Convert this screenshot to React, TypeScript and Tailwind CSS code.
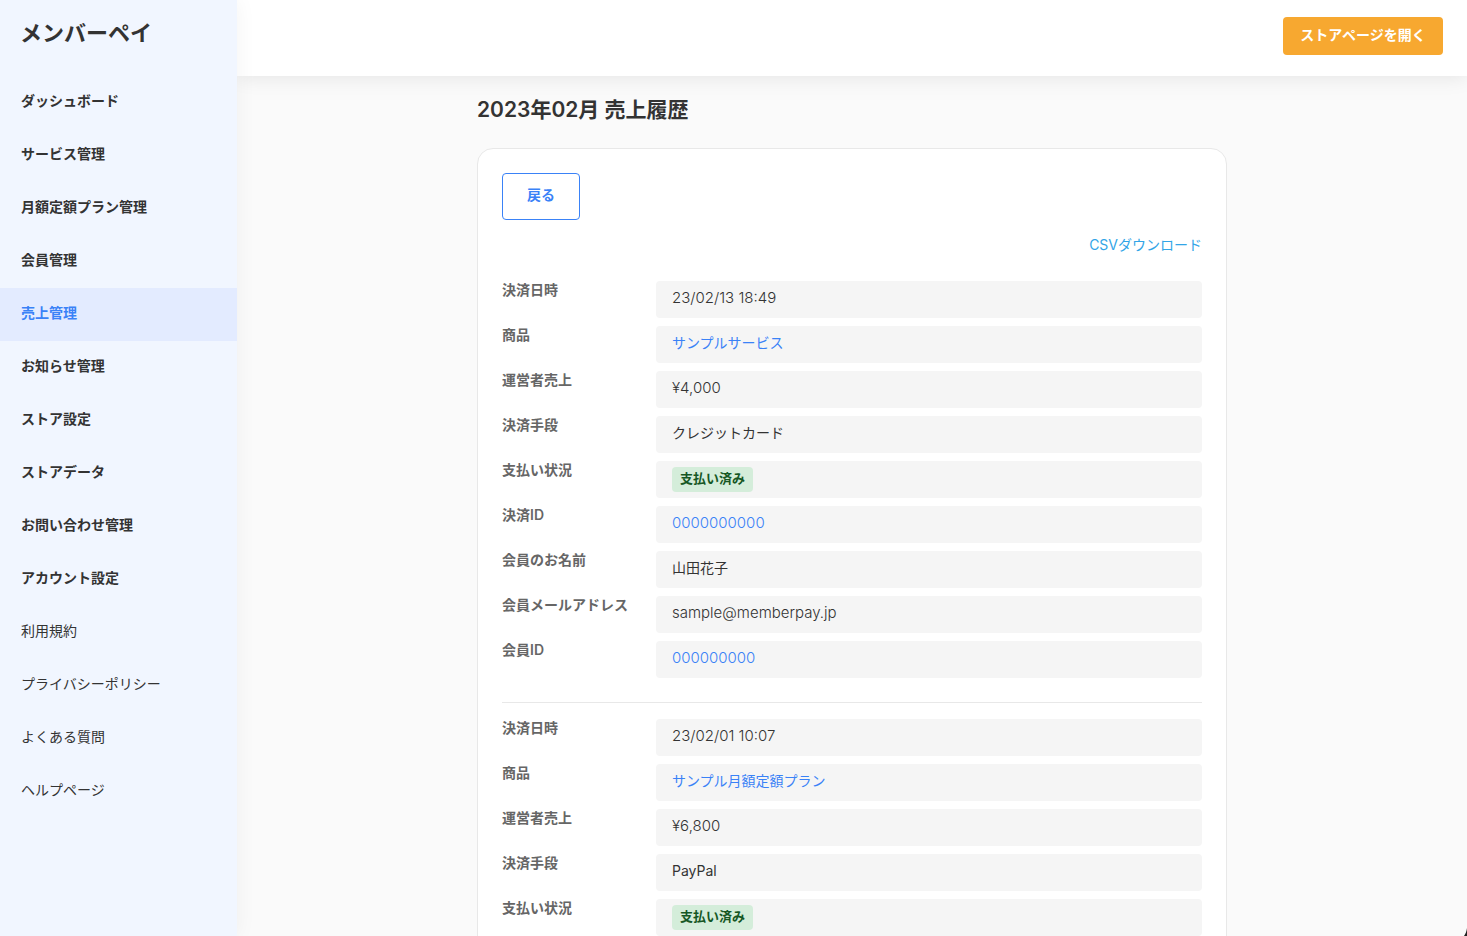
import type { ReactNode } from 'react';

type MenuItem = { label: string; sub?: boolean; active?: boolean };

type Sale = {
  date: string;
  product: string;
  amount: string;
  method: string;
  status: string;
  paymentId?: string;
  memberName?: string;
  memberEmail?: string;
  memberId?: string;
};

const menuItems: MenuItem[] = [
  { label: 'ダッシュボード' },
  { label: 'サービス管理' },
  { label: '月額定額プラン管理' },
  { label: '会員管理' },
  { label: '売上管理', active: true },
  { label: 'お知らせ管理' },
  { label: 'ストア設定' },
  { label: 'ストアデータ' },
  { label: 'お問い合わせ管理' },
  { label: 'アカウント設定' },
  { label: '利用規約', sub: true },
  { label: 'プライバシーポリシー', sub: true },
  { label: 'よくある質問', sub: true },
  { label: 'ヘルプページ', sub: true },
];

const sales: Sale[] = [
  {
    date: '23/02/13 18:49',
    product: 'サンプルサービス',
    amount: '¥4,000',
    method: 'クレジットカード',
    status: '支払い済み',
    paymentId: '0000000000',
    memberName: '山田花子',
    memberEmail: 'sample@memberpay.jp',
    memberId: '000000000',
  },
  {
    date: '23/02/01 10:07',
    product: 'サンプル月額定額プラン',
    amount: '¥6,800',
    method: 'PayPal',
    status: '支払い済み',
  },
];

function Sidebar() {
  return (
    <aside className="sticky top-0 z-20 h-screen w-[237px] shrink-0 overflow-hidden bg-[#f1f6ff] shadow-[0_0_20px_rgba(0,0,0,0.05)]">
      <a href="#" className="flex h-[76px] items-start px-5 pt-4 text-[22px] leading-[34px] font-semibold">
        メンバーペイ
      </a>
      <nav>
        {menuItems.map((item) => (
          <a
            key={item.label}
            href="#"
            className={`flex h-[53px] items-center px-[21px] pb-[3px] ${item.sub ? 'font-normal' : 'font-semibold'} ${
              item.active ? 'bg-[#e3ebff] text-[#3a82f7]' : ''
            }`}
          >
            {item.label}
          </a>
        ))}
      </nav>
    </aside>
  );
}

function Row({ label, children }: { label: string; children: ReactNode }) {
  return (
    <div className="flex">
      <dt className="w-[154px] shrink-0 leading-[18px] font-semibold text-[#666]">{label}</dt>
      <dd className="flex h-[37px] flex-1 items-center rounded bg-[#f5f5f5] px-4 pb-[3px]">{children}</dd>
    </div>
  );
}

function SaleDetail({ sale }: { sale: Sale }) {
  return (
    <dl className="flex flex-col gap-2">
      <Row label="決済日時">
        <span className="text-[15px] font-light">{sale.date}</span>
      </Row>
      <Row label="商品">
        <a href="#" className="text-[#3a82f7]">{sale.product}</a>
      </Row>
      <Row label="運営者売上">
        <span className="text-[15px] font-light">{sale.amount}</span>
      </Row>
      <Row label="決済手段">{sale.method}</Row>
      <Row label="支払い状況">
        <span className="mt-0.5 rounded bg-[#d4edda] px-2 pb-0.5 text-[13px] leading-[23px] font-bold text-[#155724]">
          {sale.status}
        </span>
      </Row>
      {sale.paymentId && (
        <Row label="決済ID">
          <a href="#" className="text-[15px] font-light text-[#3a82f7]">{sale.paymentId}</a>
        </Row>
      )}
      {sale.memberName && <Row label="会員のお名前">{sale.memberName}</Row>}
      {sale.memberEmail && (
        <Row label="会員メールアドレス">
          <span className="text-[15px] font-light">{sale.memberEmail}</span>
        </Row>
      )}
      {sale.memberId && (
        <Row label="会員ID">
          <a href="#" className="text-[15px] font-light text-[#3a82f7]">{sale.memberId}</a>
        </Row>
      )}
    </dl>
  );
}

export default function App() {
  return (
    <div className="flex min-h-screen bg-[#fafafa] font-['Inter','Noto_Sans_CJK_JP',sans-serif] text-sm text-[#333]">
      <Sidebar />

      <div className="min-w-0 flex-1">
        <header className="sticky top-0 z-10 flex h-[76px] items-start justify-end bg-white px-6 pt-[17px] shadow-[0_0_20px_rgba(0,0,0,0.1)]">
          <a
            href="#"
            className="flex h-[38px] w-40 items-center justify-center rounded bg-[#f7a830] pb-0.5 font-semibold text-white"
          >
            ストアページを開く
          </a>
        </header>

        <main className="mx-auto max-w-[750px] pt-4">
          <h1 className="pt-0.5 text-[21px] leading-8 font-semibold">2023年02月 売上履歴</h1>

          <section className="mt-[22px] rounded-2xl border border-[#e8e8e8] bg-white p-6">
            <button
              type="button"
              className="flex h-[47px] w-[78px] items-center justify-center rounded border border-[#3a82f7] pb-[3px] font-semibold text-[#3a82f7]"
            >
              戻る
            </button>
            <div className="mt-[15px] mb-[26px] flex justify-end">
              <a href="#" className="leading-5 text-[#32a5e7]">CSVダウンロード</a>
            </div>

            {sales.map((sale, i) => (
              <div key={sale.date} className={i > 0 ? 'mt-6 border-t border-[#e8e8e8] pt-4' : ''}>
                <SaleDetail sale={sale} />
              </div>
            ))}
          </section>
        </main>
      </div>

      {/* Edge of the corner widget */}
      <svg className="fixed right-0 bottom-0 z-30" width="3" height="8" viewBox="0 0 3 8" aria-hidden="true">
        <path d="M3 0 C2.6 3 1.6 6 0 8 L3 8 Z" fill="#222" />
      </svg>
    </div>
  );
}
